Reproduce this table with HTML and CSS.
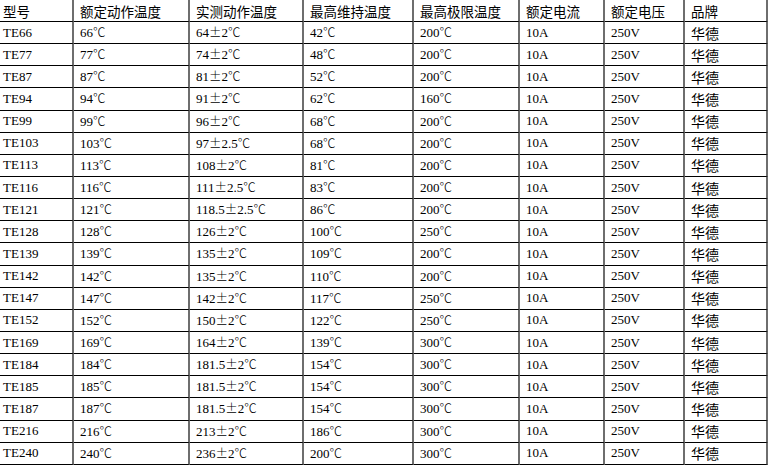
FILE: index.html
```html
<!DOCTYPE html>
<html lang="zh">
<head>
<meta charset="utf-8">
<title>型号参数表</title>
<link rel="stylesheet" href="styles.css">
</head>
<body>
<table class="spec">
<colgroup>
<col class="c1"><col class="c2"><col class="c3"><col class="c4"><col class="c5"><col class="c6"><col class="c7"><col class="c8">
</colgroup>
<thead>
<tr><th>型号</th><th>额定动作温度</th><th>实测动作温度</th><th>最高维持温度</th><th>最高极限温度</th><th>额定电流</th><th>额定电压</th><th>品牌</th></tr>
</thead>
<tbody>
<tr><td>TE66</td><td>66<span class="u">℃</span></td><td>64<span class="u">±</span>2<span class="u">℃</span></td><td>42<span class="u">℃</span></td><td>200<span class="u">℃</span></td><td>10A</td><td>250V</td><td class="brand">华德</td></tr>
<tr><td>TE77</td><td>77<span class="u">℃</span></td><td>74<span class="u">±</span>2<span class="u">℃</span></td><td>48<span class="u">℃</span></td><td>200<span class="u">℃</span></td><td>10A</td><td>250V</td><td class="brand">华德</td></tr>
<tr><td>TE87</td><td>87<span class="u">℃</span></td><td>81<span class="u">±</span>2<span class="u">℃</span></td><td>52<span class="u">℃</span></td><td>200<span class="u">℃</span></td><td>10A</td><td>250V</td><td class="brand">华德</td></tr>
<tr><td>TE94</td><td>94<span class="u">℃</span></td><td>91<span class="u">±</span>2<span class="u">℃</span></td><td>62<span class="u">℃</span></td><td>160<span class="u">℃</span></td><td>10A</td><td>250V</td><td class="brand">华德</td></tr>
<tr><td>TE99</td><td>99<span class="u">℃</span></td><td>96<span class="u">±</span>2<span class="u">℃</span></td><td>68<span class="u">℃</span></td><td>200<span class="u">℃</span></td><td>10A</td><td>250V</td><td class="brand">华德</td></tr>
<tr><td>TE103</td><td>103<span class="u">℃</span></td><td>97<span class="u">±</span>2.5<span class="u">℃</span></td><td>68<span class="u">℃</span></td><td>200<span class="u">℃</span></td><td>10A</td><td>250V</td><td class="brand">华德</td></tr>
<tr><td>TE113</td><td>113<span class="u">℃</span></td><td>108<span class="u">±</span>2<span class="u">℃</span></td><td>81<span class="u">℃</span></td><td>200<span class="u">℃</span></td><td>10A</td><td>250V</td><td class="brand">华德</td></tr>
<tr><td>TE116</td><td>116<span class="u">℃</span></td><td>111<span class="u">±</span>2.5<span class="u">℃</span></td><td>83<span class="u">℃</span></td><td>200<span class="u">℃</span></td><td>10A</td><td>250V</td><td class="brand">华德</td></tr>
<tr><td>TE121</td><td>121<span class="u">℃</span></td><td>118.5<span class="u">±</span>2.5<span class="u">℃</span></td><td>86<span class="u">℃</span></td><td>200<span class="u">℃</span></td><td>10A</td><td>250V</td><td class="brand">华德</td></tr>
<tr><td>TE128</td><td>128<span class="u">℃</span></td><td>126<span class="u">±</span>2<span class="u">℃</span></td><td>100<span class="u">℃</span></td><td>250<span class="u">℃</span></td><td>10A</td><td>250V</td><td class="brand">华德</td></tr>
<tr><td>TE139</td><td>139<span class="u">℃</span></td><td>135<span class="u">±</span>2<span class="u">℃</span></td><td>109<span class="u">℃</span></td><td>200<span class="u">℃</span></td><td>10A</td><td>250V</td><td class="brand">华德</td></tr>
<tr><td>TE142</td><td>142<span class="u">℃</span></td><td>135<span class="u">±</span>2<span class="u">℃</span></td><td>110<span class="u">℃</span></td><td>200<span class="u">℃</span></td><td>10A</td><td>250V</td><td class="brand">华德</td></tr>
<tr><td>TE147</td><td>147<span class="u">℃</span></td><td>142<span class="u">±</span>2<span class="u">℃</span></td><td>117<span class="u">℃</span></td><td>250<span class="u">℃</span></td><td>10A</td><td>250V</td><td class="brand">华德</td></tr>
<tr><td>TE152</td><td>152<span class="u">℃</span></td><td>150<span class="u">±</span>2<span class="u">℃</span></td><td>122<span class="u">℃</span></td><td>250<span class="u">℃</span></td><td>10A</td><td>250V</td><td class="brand">华德</td></tr>
<tr><td>TE169</td><td>169<span class="u">℃</span></td><td>164<span class="u">±</span>2<span class="u">℃</span></td><td>139<span class="u">℃</span></td><td>300<span class="u">℃</span></td><td>10A</td><td>250V</td><td class="brand">华德</td></tr>
<tr><td>TE184</td><td>184<span class="u">℃</span></td><td>181.5<span class="u">±</span>2<span class="u">℃</span></td><td>154<span class="u">℃</span></td><td>300<span class="u">℃</span></td><td>10A</td><td>250V</td><td class="brand">华德</td></tr>
<tr><td>TE185</td><td>185<span class="u">℃</span></td><td>181.5<span class="u">±</span>2<span class="u">℃</span></td><td>154<span class="u">℃</span></td><td>300<span class="u">℃</span></td><td>10A</td><td>250V</td><td class="brand">华德</td></tr>
<tr><td>TE187</td><td>187<span class="u">℃</span></td><td>181.5<span class="u">±</span>2<span class="u">℃</span></td><td>154<span class="u">℃</span></td><td>300<span class="u">℃</span></td><td>10A</td><td>250V</td><td class="brand">华德</td></tr>
<tr><td>TE216</td><td>216<span class="u">℃</span></td><td>213<span class="u">±</span>2<span class="u">℃</span></td><td>186<span class="u">℃</span></td><td>300<span class="u">℃</span></td><td>10A</td><td>250V</td><td class="brand">华德</td></tr>
<tr><td>TE240</td><td>240<span class="u">℃</span></td><td>236<span class="u">±</span>2<span class="u">℃</span></td><td>200<span class="u">℃</span></td><td>300<span class="u">℃</span></td><td>10A</td><td>250V</td><td class="brand">华德</td></tr>
</tbody>
</table>
</body>
</html>
```
FILE: styles.css
```css
html, body {
  margin: 0;
  padding: 0;
  background: #ffffff;
}

.spec {
  width: 768px;
  table-layout: fixed;
  border-collapse: separate;
  border-spacing: 0;
  font-family: "Liberation Serif", "Noto Sans CJK SC", serif;
  font-size: 13px;
  color: #000000;
}

.c1 { width: 74px; }
.c2 { width: 116px; }
.c3 { width: 114px; }
.c4 { width: 110px; }
.c5 { width: 106px; }
.c6 { width: 85px; }
.c7 { width: 80px; }
.c8 { width: 83px; }

.spec th,
.spec td {
  box-sizing: border-box;
  height: 22.15px;
  padding: 0 0 0 6px;
  border-right: 2px solid #6e6e6e;
  border-bottom: 1px solid #000000;
  text-align: left;
  vertical-align: middle;
  white-space: nowrap;
  overflow: hidden;
  line-height: 16px;
}

.spec th {
  height: 22px;
  font-weight: normal;
  font-family: "Noto Sans CJK SC", sans-serif;
  font-size: 13.5px;
}

.spec th:first-child,
.spec td:first-child {
  padding-left: 3px;
}

.spec .u {
  font-family: "Noto Sans CJK SC", sans-serif;
  font-size: 12.5px;
  font-weight: 300;
}

.spec td.brand {
  font-family: "Noto Sans CJK SC", sans-serif;
  font-size: 14px;
}
```
